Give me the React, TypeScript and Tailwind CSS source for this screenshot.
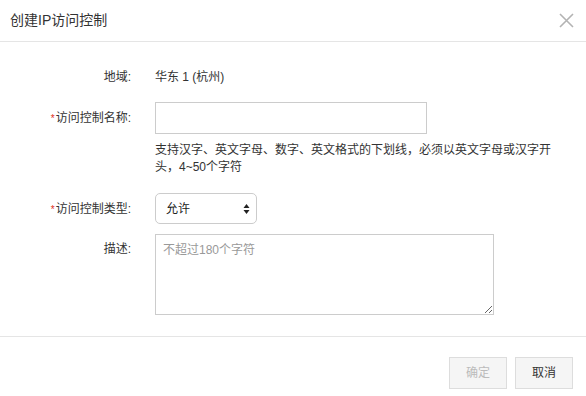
import React from 'react'

const font = { fontFamily: '"Liberation Sans", "Noto Sans CJK SC", sans-serif' }

const Label = ({ text, required }: { text: string; required?: boolean }) => (
  <div className="w-[131px] shrink-0 pr-0 text-right text-[12px] text-[#333]">
    {required && <span className="mr-[1px] text-[10px] text-[#e0301e]">*</span>}
    {text}:
  </div>
)

const SelectArrows = () => (
  <svg width="7" height="12" viewBox="0 0 7 12" className="text-[#222]">
    <path d="M3.5 1 L6.5 5 L0.5 5 Z" fill="currentColor" />
    <path d="M3.5 11 L6.5 7 L0.5 7 Z" fill="currentColor" />
  </svg>
)

export default function App() {
  return (
    <div className="w-[586px] h-[396px] overflow-hidden bg-white" style={font}>
      {/* header */}
      <div className="flex h-[42px] items-center justify-between border-b border-[#e5e5e5] pl-[10px] pr-[12px]">
        <h1 className="text-[14px] text-[#333]">创建IP访问控制</h1>
        <svg width="15" height="15" viewBox="0 0 15 15" className="text-[#b3b3b3]">
          <path d="M1 1 L14 14 M14 1 L1 14" stroke="currentColor" strokeWidth="1.6" />
        </svg>
      </div>

      {/* body */}
      <div className="pt-[25px]">
        <div className="flex h-5 items-center">
          <Label text="地域" />
          <div className="pl-[24px] text-[12px] text-[#333]">华东 1 (杭州)</div>
        </div>

        <div className="mt-[15px] flex items-center">
          <Label text="访问控制名称" required />
          <div className="pl-[24px]">
            <input className="block h-[32px] w-[272px] border border-[#ccc] bg-white px-2 text-[12px] outline-none" />
          </div>
        </div>

        <div className="ml-[155px] mt-[8px] w-[400px] text-[12px] leading-[17px] text-[#333]">
          支持汉字、英文字母、数字、英文格式的下划线，必须以英文字母或汉字开头，4~50个字符
        </div>

        <div className="mt-[17px] flex items-center">
          <Label text="访问控制类型" required />
          <div className="pl-[24px]">
            <div className="flex h-[31px] w-[102px] items-center justify-between rounded-[5px] border border-[#ccc] bg-white pl-[10px] pr-[6px] text-[12px] text-[#222]">
              <span>允许</span>
              <SelectArrows />
            </div>
          </div>
        </div>

        <div className="mt-[10px] flex items-start">
          <div className="pt-[6px]">
            <Label text="描述" />
          </div>
          <div className="pl-[24px]">
            <textarea
              placeholder="不超过180个字符"
              className="block h-[81px] w-[339px] border border-[#ccc] bg-white px-[7px] py-[5px] text-[12px] leading-[20px] text-[#333] outline-none placeholder:text-[#999]"
            />
          </div>
        </div>
      </div>

      {/* footer */}
      <div className="mt-[21px] flex justify-end gap-[8px] border-t border-[#e5e5e5] pr-[13px] pt-[20px]">
        <button className="h-[32px] w-[58px] border border-[#ddd] bg-[#f5f5f5] text-[12px] text-[#bbb]">确定</button>
        <button className="h-[32px] w-[58px] border border-[#ddd] bg-[#f5f5f5] text-[12px] text-[#333]">取消</button>
      </div>
    </div>
  )
}
